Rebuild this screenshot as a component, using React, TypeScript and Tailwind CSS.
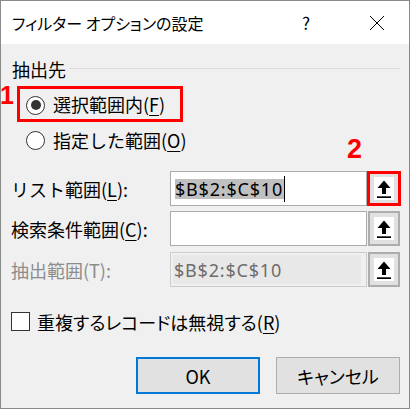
import React from "react";

const jp = { fontFamily: '"Noto Sans CJK JP", "Noto Sans", sans-serif' } as React.CSSProperties;

function Arrow() {
  return (
    <div className="w-[20px] h-[23px] bg-white flex items-center justify-center">
      <svg width="16" height="20" viewBox="0 0 16 20">
        <path d="M8 1.5 L14.5 9 H10 V15 H6 V9 H1.5 Z" fill="#000" />
        <rect x="1" y="17.3" width="14" height="1.7" fill="#000" />
      </svg>
    </div>
  );
}

function U({ c }: { c: string }) {
  return <span className="underline underline-offset-[3px] decoration-1">{c}</span>;
}

export default function App() {
  return (
    <div className="w-[411px] h-[410px] bg-white relative overflow-hidden" style={jp}>
      <div className="w-[410px] h-[409px] border border-[#8a8a8a] flex flex-col text-black">
        {/* title bar */}
        <div className="h-[43px] bg-white flex items-center pl-[11px] pr-[17px] shrink-0">
          <span className="text-[16px] [font-feature-settings:'palt'] leading-none">フィルター オプションの設定</span>
          <div className="flex-1" />
          <div className="w-[30px] flex justify-center text-[17px] leading-none">?</div>
          <div className="w-[40px]" />
          <div className="w-[31px] flex justify-center">
            <svg width="16" height="16" viewBox="0 0 16 16">
              <path d="M1 1 L15 15 M15 1 L1 15" stroke="#000" strokeWidth="1" />
            </svg>
          </div>
        </div>
        {/* body */}
        <div className="flex-1 bg-[#f0f0f0] relative pt-[12px] text-[18px]">
          {/* group header */}
          <div className="h-[26px] flex items-center pl-[11px] pr-[9px]">
            <span className="leading-none">抽出先</span>
            <div className="flex-1 h-px bg-[#dcdcdc] ml-[3px] mt-[-1px]" />
          </div>
          {/* radio 1 with red box */}
          <div className="mt-[4px] ml-[16px] w-[166px] h-[36px] border-[3px] border-[#ff0000] flex items-center pl-[6px]">
            <div className="w-[19px] h-[19px] rounded-full border border-[#333] bg-white flex items-center justify-center mt-[2px]">
              <div className="w-[10px] h-[10px] rounded-full bg-[#333]" />
            </div>
            <span className="ml-[8px] leading-none">選択範囲内(<U c="F" />)</span>
          </div>
          {/* radio 2 */}
          <div className="h-[36px] flex items-center pl-[25px]">
            <div className="w-[19px] h-[19px] rounded-full border border-[#333] bg-white" />
            <span className="ml-[8px] leading-none">指定した範囲(<U c="O" />)</span>
          </div>
          {/* row 1 */}
          <div className="mt-[13px] h-[35px] flex items-center pl-[10px]">
            <div className="w-[159px] leading-none">リスト範囲(<U c="L" />):</div>
            <div className="w-[197px] h-[35px] border border-[#ababab] bg-white flex items-center pl-[4px]">
              <div className="relative flex items-center">
                <span className="bg-[#c0c0c0] leading-[20px] text-[18px] tracking-[0.8px] pr-[1px]" style={{ fontFamily: '"Noto Sans", sans-serif' }}>$B$2:$C$10</span>
                <div className="w-px h-[26px] bg-black" />
              </div>
            </div>
            <div className="w-[34px] h-[35px] border-[3px] border-[#ff0000] bg-[#e1e1e1] flex items-center justify-center">
              <Arrow />
            </div>
          </div>
          {/* row 2 */}
          <div className="mt-[5px] h-[35px] flex items-center pl-[10px]">
            <div className="w-[159px] leading-none">検索条件範囲(<U c="C" />):</div>
            <div className="w-[197px] h-[35px] border border-[#ababab] bg-white" />
            <div className="ml-[1px] w-[32px] h-[35px] border-2 border-[#adadad] bg-[#e1e1e1] flex items-center justify-center">
              <Arrow />
            </div>
          </div>
          {/* row 3 */}
          <div className="mt-[6px] h-[35px] flex items-center pl-[10px]">
            <div className="w-[159px] leading-none text-[#8c8c8c]">抽出範囲(T):</div>
            <div className="w-[197px] h-[35px] border border-[#cccccc] bg-[#f0f0f0] p-[2px] pr-[5px]">
              <div className="h-full bg-[#e8e8e8] flex items-center pl-[1px]">
                <span className="text-[18px] tracking-[0.8px] text-[#6d6d6d] leading-none" style={{ fontFamily: '"Noto Sans", sans-serif' }}>$B$2:$C$10</span>
              </div>
            </div>
            <div className="ml-[1px] w-[32px] h-[35px] border-2 border-[#adadad] bg-[#e1e1e1] flex items-center justify-center">
              <Arrow />
            </div>
          </div>
          {/* checkbox */}
          <div className="mt-[25px] h-[19px] flex items-center pl-[10px]">
            <div className="w-[19px] h-[19px] border border-[#333] bg-white" />
            <span className="ml-[7px] leading-none [font-feature-settings:'palt']">重複するレコードは無視する(<U c="R" />)</span>
          </div>
          {/* buttons */}
          <div className="mt-[26px] flex justify-end gap-[16px] pr-[9px]">
            <div className="w-[124px] h-[37px] border-2 border-[#0078d7] bg-[#e1e1e1] flex items-center justify-center leading-none">OK</div>
            <div className="w-[124px] h-[37px] border border-[#adadad] bg-[#e1e1e1] flex items-center justify-center leading-none [font-feature-settings:'palt']">キャンセル</div>
          </div>
          {/* annotations */}
          <div className="absolute left-[-1px] top-[39px] text-[#ff0000] font-bold text-[25px] leading-none" style={{ fontFamily: '"Liberation Sans", Arial, sans-serif' }}>1</div>
          <div className="absolute left-[346px] top-[92px] text-[#ff0000] font-bold text-[27px] leading-none" style={{ fontFamily: '"Liberation Sans", Arial, sans-serif' }}>2</div>
        </div>
      </div>
    </div>
  );
}
